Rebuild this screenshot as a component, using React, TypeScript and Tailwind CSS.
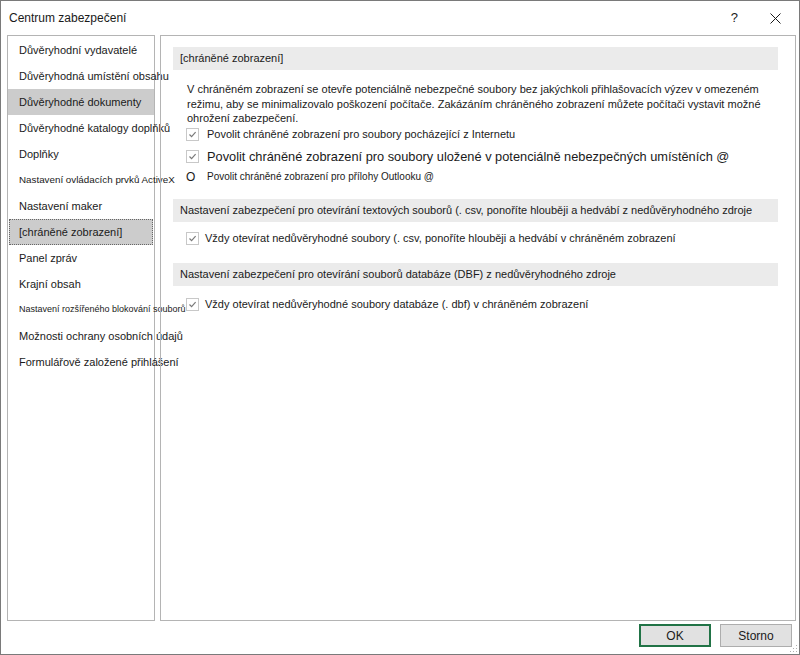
import type { ReactNode } from "react";

type NavItem = {
  label: string;
  size?: string;
  state?: "selected" | "focused";
};

const navItems: NavItem[] = [
  { label: "Důvěryhodní vydavatelé" },
  { label: "Důvěryhodná umístění obsahu" },
  { label: "Důvěryhodné dokumenty", state: "selected" },
  { label: "Důvěryhodné katalogy doplňků" },
  { label: "Doplňky" },
  { label: "Nastavení ovládacích prvků ActiveX", size: "text-[9.8px]" },
  { label: "Nastavení maker" },
  { label: "[chráněné zobrazení]", state: "focused" },
  { label: "Panel zpráv" },
  { label: "Krajní obsah" },
  { label: "Nastavení rozšířeného blokování souborů", size: "text-[9px]" },
  { label: "Možnosti ochrany osobních údajů" },
  { label: "Formulářově založené přihlášení" },
];

function CheckBox() {
  return (
    <span className="flex h-[13px] w-[13px] shrink-0 items-center justify-center border border-[#c8c8c8] bg-white">
      <svg width="9" height="9" viewBox="0 0 9 9" fill="none">
        <path d="M1.5 4.5 L3.6 6.6 L7.6 2.2" stroke="#7a7a7a" strokeWidth="1.2" />
      </svg>
    </span>
  );
}

function SectionBar({ children }: { children: ReactNode }) {
  return (
    <div className="flex h-[23px] items-center whitespace-nowrap bg-[#ebebeb] px-[7px] text-[11px] text-[#1a1a1a]">
      {children}
    </div>
  );
}

export default function App() {
  return (
    <div className="flex h-[655px] w-[800px] flex-col border border-[#7a7a7a] bg-white font-['Liberation_Sans',Arial,sans-serif] text-[11px] text-[#1a1a1a]">
      {/* title bar */}
      <div className="flex h-[34px] shrink-0 items-center pl-[8px] pr-[18px]">
        <span className="text-[12px]">Centrum zabezpečení</span>
        <span className="ml-auto mr-[32px] text-[13px]">?</span>
        <svg width="11" height="11" viewBox="0 0 11 11">
          <path d="M0.5 0.5 L10.5 10.5 M10.5 0.5 L0.5 10.5" stroke="#1a1a1a" strokeWidth="1" />
        </svg>
      </div>

      <div className="flex h-[586px] shrink-0 gap-[5px] pl-[6px] pr-[3px]">
        {/* left nav */}
        <div className="w-[148px] shrink-0 border border-[#b4b4b4] pt-[1px]">
          {navItems.map((item) => (
            <div
              key={item.label}
              className={`flex h-[26px] items-center whitespace-nowrap ${
                item.state === "selected"
                  ? "bg-[#cccccc] pl-[11px]"
                  : item.state === "focused"
                    ? "mx-px border border-dotted border-[#666] bg-[#cccccc] pl-[9px]"
                    : "pl-[11px]"
              } ${item.size ?? "text-[11px]"}`}
            >
              {item.label}
            </div>
          ))}
        </div>

        {/* right panel */}
        <div className="flex-1 border border-[#b4b4b4] pl-[12px] pr-[17px] pt-[11px]">
          <div className="h-[24px]">
            <SectionBar>[chráněné zobrazení]</SectionBar>
          </div>
          <p className="mt-[11px] whitespace-nowrap pl-[14px] text-[11px] leading-[14.5px]">
            V chráněném zobrazení se otevře potenciálně nebezpečné soubory bez jakýchkoli přihlašovacích výzev v omezeném
            <br />
            režimu, aby se minimalizovalo poškození počítače. Zakázáním chráněného zobrazení můžete počítači vystavit možné
            <br />
            ohrožení zabezpečení.
          </p>
          <div className="mt-[2px] flex h-[13px] items-center gap-[8px] pl-[13px]">
            <CheckBox />
            <span className="whitespace-nowrap text-[11px]">
              Povolit chráněné zobrazení pro soubory pocházející z Internetu
            </span>
          </div>
          <div className="mt-[6px] flex h-[20px] items-center gap-[8px] pl-[13px]">
            <CheckBox />
            <span className="whitespace-nowrap text-[12.8px]">
              Povolit chráněné zobrazení pro soubory uložené v potenciálně nebezpečných umístěních @
            </span>
          </div>
          <div className="mt-[2px] flex h-[16px] items-center gap-[8px] pl-[13px]">
            <span className="w-[13px] text-[12px] font-light leading-none">O</span>
            <span className="whitespace-nowrap text-[10px]">Povolit chráněné zobrazení pro přílohy Outlooku @</span>
          </div>

          <div className="mt-[14px]">
            <SectionBar>
              Nastavení zabezpečení pro otevírání textových souborů (. csv, ponoříte hlouběji a hedvábí z nedůvěryhodného zdroje
            </SectionBar>
          </div>
          <div className="mt-[8px] flex h-[18px] items-center gap-[6px] pl-[13px]">
            <CheckBox />
            <span className="whitespace-nowrap text-[11px]">
              Vždy otevírat nedůvěryhodné soubory (. csv, ponoříte hlouběji a hedvábí v chráněném zobrazení
            </span>
          </div>

          <div className="mt-[15px]">
            <SectionBar>Nastavení zabezpečení pro otevírání souborů databáze (DBF) z nedůvěryhodného zdroje</SectionBar>
          </div>
          <div className="mt-[10px] flex h-[18px] items-center gap-[6px] pl-[13px]">
            <CheckBox />
            <span className="whitespace-nowrap text-[11px]">
              Vždy otevírat nedůvěryhodné soubory databáze (. dbf) v chráněném zobrazení
            </span>
          </div>
        </div>
      </div>

      {/* footer */}
      <div className="relative flex flex-1 items-start justify-end gap-[9px] pr-[7px] pt-[3px]">
        <button
          type="button"
          className="h-[23px] w-[72px] border-2 border-[#217346] bg-[#e1e1e1] text-[12px] text-[#1a1a1a]"
        >
          OK
        </button>
        <button
          type="button"
          className="h-[23px] w-[72px] border border-[#adadad] bg-[#e1e1e1] text-[12px] text-[#1a1a1a]"
        >
          Storno
        </button>
        <svg className="absolute bottom-[1px] right-[1px]" width="8" height="8" viewBox="0 0 8 8">
          <rect x="6" y="0" width="1" height="1" fill="#b0b0b0" />
          <rect x="3" y="3" width="1" height="1" fill="#b0b0b0" />
          <rect x="6" y="3" width="1" height="1" fill="#b0b0b0" />
          <rect x="0" y="6" width="1" height="1" fill="#b0b0b0" />
          <rect x="3" y="6" width="1" height="1" fill="#b0b0b0" />
          <rect x="6" y="6" width="1" height="1" fill="#b0b0b0" />
        </svg>
      </div>
    </div>
  );
}
